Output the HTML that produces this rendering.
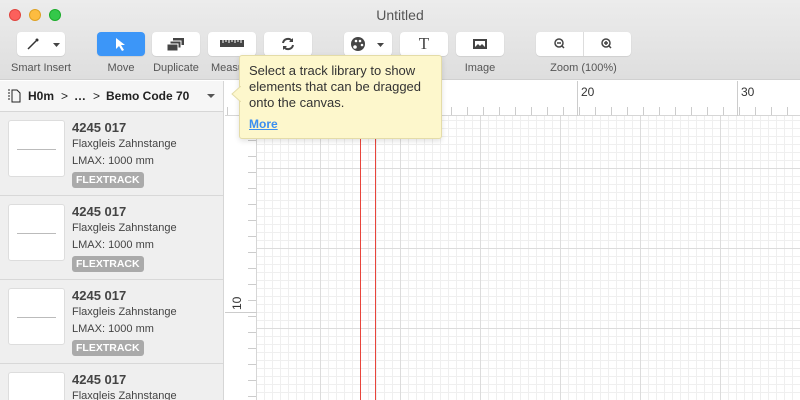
<!DOCTYPE html>
<html style="width:800px;height:400px;overflow:hidden"><head><meta charset="utf-8"><style>
*{margin:0;padding:0;box-sizing:border-box}
body{width:800px;height:400px;overflow:hidden;font-family:"Liberation Sans",sans-serif;background:#fff;position:relative;color:#333}
.tb{position:absolute;left:0;top:0;width:800px;height:80px;background:linear-gradient(#ececec,#dedede);border-bottom:1px solid #d0d0d0}
.dot{position:absolute;top:9px;width:12px;height:12px;border-radius:50%}
.title{position:absolute;top:7px;left:0;width:800px;text-align:center;font-size:14px;color:#555}
.btn{position:absolute;top:32px;height:24px;background:#fff;border-radius:4px;box-shadow:0 0.5px 1px rgba(0,0,0,.15)}
.lbl{position:absolute;top:62px;font-size:11px;color:#555;text-align:center}
.btn svg{position:absolute}
.side{position:absolute;left:0;top:81px;width:224px;height:319px;overflow:hidden;background:#efefef;border-right:1px solid #d6d6d6}
.crumb{position:absolute;left:0;top:0;width:224px;height:31px;background:#f6f6f6;border-bottom:1px solid #d6d6d6;font-size:12px;font-weight:bold;color:#222}
.item{position:absolute;left:0;width:224px;height:84px;border-bottom:1px solid #d8d8d8}
.th{position:absolute;left:8px;top:8px;width:57px;height:57px;background:#fff;border:1px solid #ddd;border-radius:3px}
.th:after{content:"";position:absolute;left:8px;right:8px;top:28px;border-top:1px solid #bbb}
.n{position:absolute;left:72px;top:8px;font-size:13px;font-weight:bold;color:#444}
.d{position:absolute;left:72px;font-size:11px;color:#444}
.tag{position:absolute;left:72px;top:60px;height:16px;padding:0 4px;background:#aaa;color:#fff;font-size:10.5px;font-weight:bold;line-height:16px;border-radius:3px}
.canvas{position:absolute;left:257px;top:116px;width:543px;height:284px;
background-image:linear-gradient(90deg,#dcdcdc 1px,transparent 1px),linear-gradient(#dcdcdc 1px,transparent 1px),linear-gradient(90deg,#efefef 1px,transparent 1px),linear-gradient(#efefef 1px,transparent 1px);
background-size:80px 80px,80px 80px,8px 8px,8px 8px;background-position:63px 0,0 52px,7px 0,0 4px}
.rt{position:absolute;left:225px;top:81px;width:575px;height:35px;background:#fff;border-bottom:1px solid #d6d6d6;
background-image:linear-gradient(90deg,#ccc 1px,transparent 1px);background-size:16px 9px;background-repeat:repeat-x;background-position:2px 26px}
.rl{position:absolute;left:225px;top:116px;width:32px;height:284px;background:#fff;border-right:1px solid #d6d6d6;
background-image:linear-gradient(#ccc 1px,transparent 1px);background-size:9px 16px;background-repeat:repeat-y;background-position:23px 8px}
.tip{position:absolute;left:239px;top:55px;width:203px;height:84px;background:#fdf7cc;border:1px solid #e4dca8;border-radius:3px;box-shadow:0 2px 6px rgba(0,0,0,.12);font-size:13px;line-height:16px;color:#333;padding:7px 9px;z-index:5}
.red{position:absolute;top:116px;width:1px;height:284px;background:#e8453c;z-index:3}
</style></head><body>
<div class="tb">
<div class="dot" style="left:9px;background:#fc605c;border:1px solid #e0443e"></div>
<div class="dot" style="left:29px;background:#fdbc40;border:1px solid #dea123"></div>
<div class="dot" style="left:49px;background:#34c84a;border:1px solid #1aab29"></div>
<div class="title">Untitled</div>
<div class="btn" style="left:17px;width:48px"><svg width="48" height="24"><path d="M11 17 L19 9" stroke="#333" stroke-width="1.5"/><circle cx="20" cy="8" r="1.5" fill="#333"/><path d="M36 11h7l-3.5 4z" fill="#444"/></svg></div>
<div class="btn" style="left:97px;width:48px;background:#3c96f8"><svg width="48" height="24"><path d="M19 6 L19 17 L22 14 L25 19 L27 18 L24 13 L28 13 Z" fill="#fff"/></svg></div>
<div class="btn" style="left:152px;width:48px"><svg width="48" height="24"><rect x="21" y="6" width="11" height="7" fill="#444"/><rect x="18" y="9" width="11" height="7" fill="#444" stroke="#fff"/><rect x="15" y="12" width="11" height="7" fill="#444" stroke="#fff"/></svg></div>
<div class="btn" style="left:208px;width:48px"><svg width="48" height="24"><rect x="12" y="8" width="24" height="7" fill="#444"/><path d="M15 8v3M18 8v2M21 8v3M24 8v2M27 8v3M30 8v2M33 8v3" stroke="#fff"/></svg></div>
<div class="btn" style="left:264px;width:48px"><svg width="48" height="24"><path d="M19 11 A5 5 0 0 1 28 9 M29 13 A5 5 0 0 1 20 15" stroke="#444" stroke-width="2" fill="none"/><path d="M29 6v4h-4z M19 18v-4h4z" fill="#444"/></svg></div>
<div class="btn" style="left:344px;width:48px"><svg width="48" height="24"><circle cx="14" cy="12" r="7" fill="#444"/><circle cx="12" cy="9" r="1.3" fill="#fff"/><circle cx="16" cy="9" r="1.3" fill="#fff"/><circle cx="18" cy="13" r="1.3" fill="#fff"/><circle cx="11" cy="15" r="1.8" fill="#fff"/><path d="M33 11h7l-3.5 4z" fill="#444"/></svg></div>
<div class="btn" style="left:400px;width:48px"><div style="position:absolute;left:0;width:48px;top:2px;text-align:center;font-family:'Liberation Serif',serif;font-size:17px;color:#444">T</div></div>
<div class="btn" style="left:456px;width:48px"><svg width="48" height="24"><rect x="17" y="7" width="14" height="10" fill="#444"/><rect x="19" y="9" width="10" height="6" fill="#fff"/><path d="M19 15l3-3 2 2 2-2 3 3z" fill="#444"/></svg></div>
<div class="btn" style="left:536px;width:95px"><div style="position:absolute;left:47px;top:0;height:24px;border-left:1px solid #ddd"></div><svg width="95" height="24"><circle cx="23" cy="11" r="4" stroke="#444" stroke-width="1.5" fill="none"/><path d="M21 11h4M26 14l2 2" stroke="#444" stroke-width="1.5"/><circle cx="70" cy="11" r="4" stroke="#444" stroke-width="1.5" fill="none"/><path d="M68 11h4M70 9v4M73 14l2 2" stroke="#444" stroke-width="1.5"/></svg></div>
<div class="lbl" style="left:0;width:82px">Smart Insert</div>
<div class="lbl" style="left:97px;width:48px">Move</div>
<div class="lbl" style="left:150px;width:52px">Duplicate</div>
<div class="lbl" style="left:211px;width:48px;text-align:left">Measure</div>
<div class="lbl" style="left:456px;width:48px">Image</div>
<div class="lbl" style="left:536px;width:95px">Zoom (100%)</div>
</div>
<div class="side">
<div class="crumb"><svg style="position:absolute;left:7px;top:8px" width="14" height="14"><path d="M1 1h2M1 4h2M1 7h2M1 10h2M5 1h5l3 3v9H5z" stroke="#222" fill="none"/></svg><span style="position:absolute;left:28px;top:8px">H0m</span><span style="position:absolute;left:61px;top:8px;font-weight:normal">&gt;</span><span style="position:absolute;left:74px;top:8px">…</span><span style="position:absolute;left:93px;top:8px;font-weight:normal">&gt;</span><span style="position:absolute;left:106px;top:8px">Bemo Code 70</span><svg style="position:absolute;left:207px;top:13px" width="8" height="5"><path d="M0 0h8l-4 4z" fill="#555"/></svg></div>
<div class="item" style="top:31px"><div class="th"></div><div class="n">4245 017</div><div class="d" style="top:26px">Flaxgleis Zahnstange</div><div class="d" style="top:43px">LMAX: 1000 mm</div><div class="tag">FLEXTRACK</div></div>
<div class="item" style="top:115px"><div class="th"></div><div class="n">4245 017</div><div class="d" style="top:26px">Flaxgleis Zahnstange</div><div class="d" style="top:43px">LMAX: 1000 mm</div><div class="tag">FLEXTRACK</div></div>
<div class="item" style="top:199px"><div class="th"></div><div class="n">4245 017</div><div class="d" style="top:26px">Flaxgleis Zahnstange</div><div class="d" style="top:43px">LMAX: 1000 mm</div><div class="tag">FLEXTRACK</div></div>
<div class="item" style="top:283px"><div class="th"></div><div class="n">4245 017</div><div class="d" style="top:26px">Flaxgleis Zahnstange</div></div>
</div>
<div class="rt"></div>
<div style="position:absolute;left:577px;top:81px;height:35px;border-left:1px solid #ccc"></div>
<div style="position:absolute;left:737px;top:81px;height:35px;border-left:1px solid #ccc"></div>
<div style="position:absolute;left:581px;top:85px;font-size:12px;color:#333">20</div>
<div style="position:absolute;left:741px;top:85px;font-size:12px;color:#333">30</div>
<div class="rl"></div>
<div style="position:absolute;left:225px;top:312px;width:32px;border-top:1px solid #ccc"></div>
<div style="position:absolute;left:230px;font-size:12px;line-height:14px;color:#333;transform:rotate(-90deg);transform-origin:left top;top:310px">10</div>
<div class="canvas"></div>
<div class="red" style="left:360px"></div>
<div class="red" style="left:375px"></div>
<div class="tip">Select a track library to show elements that can be dragged onto the canvas.<div style="margin-top:5px;color:#3b8ef0;font-weight:bold;text-decoration:underline;font-size:12px">More</div>
<svg style="position:absolute;left:-9px;top:30px" width="10" height="16"><path d="M10 0 L1 8 L10 16" fill="#fdf7cc" stroke="#e4dca8"/></svg></div>
</body></html>
